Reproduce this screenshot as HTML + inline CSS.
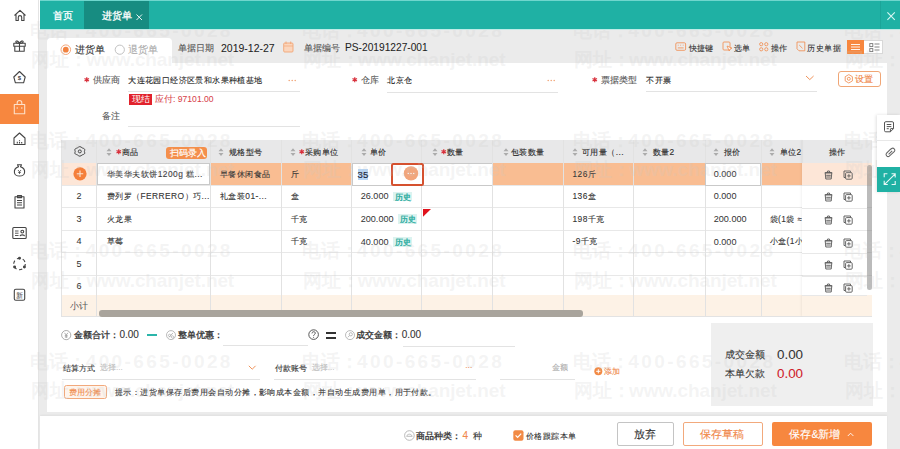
<!DOCTYPE html>
<html><head><meta charset="utf-8">
<style>
*{margin:0;padding:0;box-sizing:border-box}
html,body{width:900px;height:449px;overflow:hidden;background:#fff;font-family:"Liberation Sans",sans-serif;color:#333;font-size:8.5px}
.a{position:absolute;white-space:nowrap}
.t{position:absolute;white-space:nowrap;line-height:12px;height:12px;-webkit-text-stroke-width:0.1px}
svg.a{overflow:visible}
#side{left:0;top:0;width:39px;height:449px;background:#fff;border-right:1px solid #e4e4e4}
#top{left:40px;top:0;width:860px;height:30px;background:#1fb1a4;border-top:1px solid #6fd6cd;border-bottom:1px solid #bfece7}
#main{left:39px;top:30px;width:861px;height:419px;background:#ebebeb}
#tab1{left:84px;top:1px;width:65px;height:28px;background:#178c81}
#card{left:47px;top:63px;width:840px;height:349px;background:#fff}
#rtab{left:47px;top:38px;width:125px;height:26px;background:#fff;border-radius:4px 4px 0 0}
#foot{left:40px;top:416px;width:847px;height:33px;background:#fff;box-shadow:0 -1px 2px rgba(0,0,0,0.05)}
.wm{position:absolute;white-space:nowrap;font-size:19px;line-height:23px;color:rgba(200,200,200,0.2);z-index:5;font-weight:bold;-webkit-text-stroke-width:0}
#top,#tab1,.tb{z-index:6}
.lbl{color:#555;-webkit-text-stroke-width:0.1px}
.ul{position:absolute;height:1px;background:#e3e3e3}
.star{color:#d9323a}
.org{color:#f18a46}
</style></head><body>
<div class="a" id="side"></div>
<div class="a" id="main"></div>
<div class="a" id="top"></div>
<div class="a" id="tab1"></div>
<div class="t tb" style="left:52.5px;top:10px;font-size:9.6px;color:#fff;-webkit-text-stroke-width:0.3px">首页</div>
<div class="t tb" style="left:101.7px;top:10px;font-size:9.6px;color:#fff;-webkit-text-stroke-width:0.3px">进货单</div>
<svg class="a tb" style="left:135.5px;top:13.5px" width="7" height="7"><path d="M0.5 0.5L6 6M6 0.5L0.5 6" stroke="#fff" stroke-width="0.9"/></svg>
<div class="a tb" style="left:879.5px;top:1px;width:0.8px;height:28px;background:rgba(0,80,70,0.12)"></div><svg class="a tb" style="left:886.6px;top:12.2px" width="9" height="9"><path d="M0.4 0.4L7.8 7.8M7.8 0.4L0.4 7.8" stroke="#d8f7f3" stroke-width="1.1"/></svg>

<!-- sidebar -->
<div class="a" style="left:0;top:94px;width:39px;height:30px;background:#f7873f"></div>
<svg class="a" style="left:0;top:0" width="39" height="310" fill="none" stroke="#444" stroke-width="1.1" stroke-linejoin="round">
 <!-- home -->
 <path d="M14.5 15.5L20 10.3L25.5 15.5M16 14.3V20.5H18.3V17.3a1.7 1.7 0 0 1 3.4 0V20.5H24V14.3"/>
 <!-- gift -->
 <rect x="13.8" y="43.3" width="11.4" height="3"/><path d="M14.8 46.3V51.3H24.2V46.3M19.5 43.3V51.3M19.5 43.3C18.5 41 16 40.3 15.8 41.8C15.7 42.8 17.5 43.3 19.5 43.3C21.5 43.3 23.3 42.8 23.2 41.8C23 40.3 20.5 41 19.5 43.3"/>
 <!-- house $ -->
 <path d="M13.8 77L19.5 71.5L25.2 77L23.6 82.8H15.4Z"/>
 <text x="19.5" y="80.2" font-size="6" font-family="Liberation Sans" text-anchor="middle" fill="#444" stroke="none" font-weight="bold">$</text>
 <!-- bag (white) -->
 <path d="M14.3 104.5H24.7V113.8H14.3ZM17.2 104.5V102.8a2.3 2.3 0 0 1 4.6 0V104.5M17.2 107.2V108.8M21.8 107.2V108.8" stroke="#fde0c8"/>
 <!-- house chart -->
 <path d="M14 144.5V138L19.5 133L25 138V144.5H14Z"/><path d="M17.3 144.5V141M19.5 144.5V140M21.7 144.5V142" stroke-dasharray="1 0.6"/>
 <!-- money bag -->
 <path d="M17.5 164.8H21.5L20.5 166.8C23.5 167.8 25 170.5 24.5 173C24 175.2 22 176 19.5 176C17 176 15 175.2 14.5 173C14 170.5 15.5 167.8 18.5 166.8Z"/><path d="M18 170L19.5 171.8L21 170M19.5 171.8V174M18.2 172.5H20.8" stroke-width="0.8"/>
 <!-- clipboard -->
 <path d="M15 196.8H24V208H15Z M17.5 195.5H21.5V197.8H17.5Z M17 200.5H22M17 202.8H22M17 205H22"/>
 <!-- id card -->
 <rect x="12.8" y="227.5" width="13.4" height="11" rx="1"/><path d="M15 231H18.5M15 233.2H18.5M15 235.5H18.5" stroke-width="0.9"/><circle cx="22.3" cy="231.6" r="1.4"/><path d="M20 236.2C20.3 234.4 24.3 234.4 24.6 236.2"/>
 <!-- dotted circle -->
 <circle cx="19.5" cy="264" r="5.8" stroke-dasharray="3.4 2.6"/><circle cx="19.5" cy="258.2" r="0.9" fill="#444"/><circle cx="14.6" cy="267" r="0.9" fill="#444"/><circle cx="24.4" cy="267" r="0.9" fill="#444"/>
 <!-- doc new -->
 <rect x="14.3" y="289.3" width="10.4" height="11" rx="1.5"/><text x="19.5" y="297.6" font-size="6.5" text-anchor="middle" fill="#444" stroke="none">新</text>
</svg>

<!-- gray top area / card -->
<div class="a" id="rtab"></div>
<div class="a" id="card"></div>
<div class="a" id="foot"></div>

<!-- radio row -->
<svg class="a" style="left:60px;top:44px" width="12" height="12"><circle cx="5.8" cy="5.7" r="4.8" fill="#fff" stroke="#f5a77a" stroke-width="1"/><circle cx="5.8" cy="5.7" r="2.9" fill="#f28240"/></svg>
<div class="t" style="left:74.5px;top:43.7px;font-size:9.7px;color:#333">进货单</div>
<svg class="a" style="left:114px;top:44px" width="12" height="12"><circle cx="5.8" cy="5.7" r="4.6" fill="#fff" stroke="#c2c2c2" stroke-width="1"/></svg>
<div class="t" style="left:128px;top:43.7px;font-size:9.7px;color:#aaa">退货单</div>
<div class="t lbl" style="left:178px;top:41.5px;font-size:8.5px">单据日期</div>
<div class="t" style="left:221px;top:41.5px;font-size:10.5px;color:#222;-webkit-text-stroke-width:0.05px">2019-12-27</div>
<svg class="a" style="left:283px;top:41px" width="11" height="12"><rect x="0.7" y="2" width="9.3" height="9" rx="1" fill="#fbd6bd" stroke="#f2a676" stroke-width="0.9"/><path d="M3 0.5V3M7.7 0.5V3" stroke="#f2a676" stroke-width="0.9"/><path d="M1 5H10" stroke="#f2a676" stroke-width="0.7"/></svg>
<div class="t lbl" style="left:304px;top:41.5px;font-size:8.5px">单据编号</div>
<div class="t" style="left:345px;top:41.5px;font-size:10.2px;color:#222;-webkit-text-stroke-width:0.05px">PS-20191227-001</div>

<!-- toolbar -->
<svg class="a" style="left:675px;top:41px" width="12" height="11" fill="none" stroke="#f0935a" stroke-width="0.9"><rect x="0.8" y="1.8" width="9.8" height="7.5" rx="1.2"/><path d="M2.8 4.2H3.6M5.3 4.2H6.1M7.8 4.2H8.6M2.8 6.9H8.6"/></svg>
<div class="t" style="left:689px;top:41.5px;font-size:8.4px;color:#333;-webkit-text-stroke-width:0.1px">快捷键</div>
<svg class="a" style="left:722px;top:41px" width="12" height="11" fill="none" stroke="#f0935a" stroke-width="0.9"><rect x="1" y="1" width="7" height="8" rx="1"/><path d="M5 5L10 7.2L8 8L7.3 10Z" fill="#fff"/></svg>
<div class="t" style="left:733.5px;top:41.5px;font-size:8.4px;color:#333;-webkit-text-stroke-width:0.1px">选单</div>
<svg class="a" style="left:759px;top:42px" width="10" height="10" fill="none" stroke="#f0935a" stroke-width="0.9"><circle cx="2.2" cy="2.2" r="1.6"/><circle cx="7.3" cy="2.2" r="1.6"/><circle cx="2.2" cy="7.3" r="1.6"/><circle cx="7.3" cy="7.3" r="1.6"/></svg>
<div class="t" style="left:771px;top:41.5px;font-size:8.4px;color:#333;-webkit-text-stroke-width:0.1px">操作</div>
<svg class="a" style="left:796px;top:41px" width="10" height="11" fill="none" stroke="#f0935a" stroke-width="0.9"><path d="M1 1H8.8V9.8H3L1 7.8Z"/><path d="M3.2 4L6.5 7.3" /></svg>
<div class="t" style="left:807px;top:41.5px;font-size:8.4px;letter-spacing:0.5px;color:#333;-webkit-text-stroke-width:0.1px">历史单据</div>
<div class="a" style="left:846.5px;top:40px;width:18px;height:14px;background:#f7873f"></div>
<svg class="a" style="left:850px;top:43px" width="11" height="8"><path d="M1 1.5H10M1 4H10M1 6.5H10" stroke="#fff" stroke-width="0.9"/></svg>
<div class="a" style="left:864.4px;top:40px;width:19px;height:14px;background:#fff;border:1px solid #d8d8d8;border-left:none"></div>
<svg class="a" style="left:868.5px;top:42.5px" width="12" height="10" fill="none" stroke="#777" stroke-width="0.9"><rect x="0.8" y="0.6" width="3" height="3"/><rect x="0.8" y="5.6" width="3" height="3"/><path d="M5.5 1H10.5M5.5 4H10.5M5.5 7H10.5"/></svg>

<!-- form -->
<svg class="a" style="left:83.9px;top:76.6px" width="6" height="6"><path d="M2.75 0.2V5.3M0.5 1.4L5 4.1M5 1.4L0.5 4.1" stroke="#d8303c" stroke-width="1.2"/></svg>
<div class="t lbl" style="left:93px;top:74px;font-size:8.5px">供应商</div>
<div class="t" style="left:128.3px;top:74px;font-size:8.4px;letter-spacing:0.4px;color:#222">大连花园口经济区景和水果种植基地</div>
<svg class="a" style="left:287.5px;top:78.5px" width="10" height="4"><circle cx="1.2" cy="1.5" r="0.75" fill="#f0a070"/><circle cx="4.2" cy="1.5" r="0.75" fill="#f0a070"/><circle cx="7.2" cy="1.5" r="0.75" fill="#f0a070"/></svg>
<div class="ul" style="left:128px;top:91px;width:172px"></div>
<div class="a" style="left:128.5px;top:93.5px;width:23.5px;height:11px;background:#e1222c"></div>
<div class="t" style="left:131.5px;top:93.3px;font-size:8.6px;color:#fff;-webkit-text-stroke-width:0">现结</div>
<div class="t" style="left:155px;top:93.3px;font-size:8.6px;color:#d83f4a;-webkit-text-stroke-width:0.05px">应付: 97101.00</div>
<div class="t lbl" style="left:102px;top:110.2px;font-size:8.5px">备注</div>
<div class="ul" style="left:128px;top:126px;width:172px"></div>

<svg class="a" style="left:352.4px;top:76.6px" width="6" height="6"><path d="M2.75 0.2V5.3M0.5 1.4L5 4.1M5 1.4L0.5 4.1" stroke="#d8303c" stroke-width="1.2"/></svg>
<div class="t lbl" style="left:361px;top:74px;font-size:8.5px">仓库</div>
<div class="t" style="left:387px;top:74px;font-size:8.4px;letter-spacing:0.5px;color:#222">北京仓</div>
<svg class="a" style="left:546.5px;top:78.5px" width="10" height="4"><circle cx="1.2" cy="1.5" r="0.75" fill="#f0a070"/><circle cx="4.2" cy="1.5" r="0.75" fill="#f0a070"/><circle cx="7.2" cy="1.5" r="0.75" fill="#f0a070"/></svg>
<div class="ul" style="left:387px;top:92px;width:171px"></div>

<svg class="a" style="left:592.4px;top:76.6px" width="6" height="6"><path d="M2.75 0.2V5.3M0.5 1.4L5 4.1M5 1.4L0.5 4.1" stroke="#d8303c" stroke-width="1.2"/></svg>
<div class="t lbl" style="left:601px;top:74px;font-size:8.5px">票据类型</div>
<div class="t" style="left:646px;top:74px;font-size:8.4px;letter-spacing:0.5px;color:#222">不开票</div>
<svg class="a" style="left:805px;top:75px" width="10" height="6"><path d="M1 1L4.8 4.6L8.6 1" fill="none" stroke="#f0935a" stroke-width="1"/></svg>
<div class="ul" style="left:646px;top:91px;width:171px"></div>
<div class="a" style="left:838px;top:70.7px;width:43px;height:16px;border:1px solid #f0a676;border-radius:3px;background:#fff"></div>
<svg class="a" style="left:844px;top:74px" width="10" height="10" fill="none" stroke="#f0935a" stroke-width="0.9"><circle cx="4.8" cy="4.8" r="1.5"/><path d="M4.8 0.6L8.4 2.7V6.9L4.8 9L1.2 6.9V2.7Z"/></svg>
<div class="t" style="left:855px;top:73px;font-size:8.6px;color:#f0884a">设置</div>

<!-- right float panel -->
<div class="a" style="left:876.5px;top:114.5px;width:23.5px;height:77px;background:#fff;box-shadow:-1px 0 3px rgba(0,0,0,0.12);z-index:7"></div>
<div class="a" style="left:876.5px;top:140px;width:23.5px;height:1px;background:#e8e8e8;z-index:7"></div>
<div class="a" style="left:876.5px;top:166.7px;width:23.5px;height:25px;background:#20b1a4;z-index:7"></div>
<svg class="a" style="left:876.5px;top:114.5px;z-index:7" width="24" height="77" fill="none" stroke="#555" stroke-width="1">
 <path d="M8.8 6.7H15.2a1.3 1.3 0 0 1 1.3 1.3V13.6L13.4 16.8H8.8a1.3 1.3 0 0 1 -1.3 -1.3V8a1.3 1.3 0 0 1 1.3 -1.3Z M13.4 16.8V14.2a0.6 0.6 0 0 1 0.6 -0.6H16.5 M9.7 9.5H14.3M9.7 11.6H14.3M9.7 13.7H11.8"/>
 <path d="M12.6 35.2L14.6 33.5a2.1 2.1 0 0 1 2.9 2.9L12.3 41.2a2.1 2.1 0 0 1 -2.9 -2.9L13.6 34.2M11.6 39.3L15.2 35.8" stroke="#666" stroke-width="1.05"/>
 <path d="M7.2 62.2V58.8H10.4M14.5 58.8H18.2V62.4M18.2 58.8L7.6 69.3M7.2 65.8V69.5H10.8M14.6 69.5H18.2V66" stroke="#e6f7f5" stroke-width="1.1"/>
</svg>
<!--TABLE_START-->
<div class="a" style="left:61.3px;top:140px;width:810.7px;height:176px;background:#fff"></div>
<div class="a" style="left:61.3px;top:140px;width:810.7px;height:22.5px;background:#e8e8e9"></div>
<div class="a" style="left:61.3px;top:162.5px;width:810.7px;height:22.5px;background:#fde6d7"></div>
<div class="a" style="left:210px;top:162.5px;width:71px;height:22.5px;background:#f9bd92"></div>
<div class="a" style="left:281px;top:162.5px;width:70.6px;height:22.5px;background:#f9bd92"></div>
<div class="a" style="left:492.3px;top:162.5px;width:70.7px;height:22.5px;background:#f9bd92"></div>
<div class="a" style="left:563px;top:162.5px;width:70.6px;height:22.5px;background:#f9bd92"></div>
<div class="a" style="left:633.6px;top:162.5px;width:71.7px;height:22.5px;background:#f9bd92"></div>
<div class="a" style="left:761.3px;top:162.5px;width:40.7px;height:22.5px;background:#f9bd92"></div>
<div class="a" style="left:61.3px;top:294.5px;width:810.7px;height:21.5px;background:#fdf2e6"></div>
<div class="a" style="left:61.3px;top:184.5px;width:810.7px;height:1px;background:#e8e8e8"></div>
<div class="a" style="left:61.3px;top:207.0px;width:810.7px;height:1px;background:#e8e8e8"></div>
<div class="a" style="left:61.3px;top:229.5px;width:810.7px;height:1px;background:#e8e8e8"></div>
<div class="a" style="left:61.3px;top:252.0px;width:810.7px;height:1px;background:#e8e8e8"></div>
<div class="a" style="left:61.3px;top:275.0px;width:810.7px;height:1px;background:#e8e8e8"></div>
<div class="a" style="left:61.3px;top:315.5px;width:810.7px;height:1px;background:#e3e3e3"></div>
<div class="a" style="left:60.8px;top:140px;width:1px;height:176px;background:#e3e3e3"></div>
<div class="a" style="left:96.0px;top:140px;width:1px;height:176px;background:#e2e2e2"></div>
<div class="a" style="left:209.5px;top:140px;width:1px;height:176px;background:#e2e2e2"></div>
<div class="a" style="left:280.5px;top:140px;width:1px;height:176px;background:#e2e2e2"></div>
<div class="a" style="left:351.1px;top:140px;width:1px;height:176px;background:#e2e2e2"></div>
<div class="a" style="left:420.5px;top:140px;width:1px;height:176px;background:#e2e2e2"></div>
<div class="a" style="left:491.8px;top:140px;width:1px;height:176px;background:#e2e2e2"></div>
<div class="a" style="left:562.5px;top:140px;width:1px;height:176px;background:#e2e2e2"></div>
<div class="a" style="left:633.1px;top:140px;width:1px;height:176px;background:#e2e2e2"></div>
<div class="a" style="left:704.8px;top:140px;width:1px;height:176px;background:#e2e2e2"></div>
<div class="a" style="left:760.8px;top:140px;width:1px;height:176px;background:#e2e2e2"></div>
<div class="a" style="left:801.5px;top:140px;width:1px;height:176px;background:#e0e0e0;box-shadow:-1px 0 2px rgba(0,0,0,0.08)"></div>
<div class="a" style="left:97.3px;top:163.3px;width:112.9px;height:22px;background:#fff;border:1.2px solid #c9c9c9"></div>
<div class="a" style="left:351.6px;top:162.8px;width:73px;height:23px;background:#fff;border:1.2px solid #c9c9c9"></div>
<div class="a" style="left:421px;top:162.8px;width:71.3px;height:23px;background:#fff;border-top:1.2px solid #c9c9c9;border-bottom:1.2px solid #c9c9c9"></div>
<div class="a" style="left:705.3px;top:162.8px;width:56px;height:23px;background:#fff;border:1.2px solid #c9c9c9"></div>
<svg class="a" style="left:73.6px;top:146.2px" width="12" height="11" fill="none" stroke="#444" stroke-width="1"><path d="M5.8 0.6C6.9 0.6 7.4 1.5 8.2 1.9C9.1 2.3 10.3 2.4 10.7 3.4C11 4.3 10.4 4.9 10.4 5.4C10.4 5.9 11 6.5 10.7 7.4C10.3 8.4 9.1 8.5 8.2 8.9C7.4 9.3 6.9 10.2 5.8 10.2C4.7 10.2 4.2 9.3 3.4 8.9C2.5 8.5 1.3 8.4 0.9 7.4C0.6 6.5 1.2 5.9 1.2 5.4C1.2 4.9 0.6 4.3 0.9 3.4C1.3 2.4 2.5 2.3 3.4 1.9C4.2 1.5 4.7 0.6 5.8 0.6Z"/><circle cx="5.8" cy="5.4" r="1.5"/></svg>
<svg class="a" style="left:106px;top:147.6px" width="7" height="9"><path d="M0.5 3.2L3 0.3L5.5 3.2Z M0.5 5.1L3 8.1L5.5 5.1Z" fill="#acacac"/></svg>
<svg class="a" style="left:115.5px;top:149px" width="6" height="6"><path d="M2.75 0.2V5.3M0.5 1.4L5 4.1M5 1.4L0.5 4.1" stroke="#d8303c" stroke-width="1.2"/></svg>
<div class="t" style="left:122px;top:146px;font-size:8.4px;letter-spacing:0.45px;color:#2a2a2a;-webkit-text-stroke-width:0.12px">商品</div>
<div class="a" style="left:166.3px;top:147px;width:41px;height:12px;background:#f48f4c;border-radius:3px"></div>
<div class="t" style="left:169.5px;top:147px;font-size:8.5px;color:#fff;-webkit-text-stroke-width:0.15px">扫码录入</div>
<svg class="a" style="left:217.5px;top:147.6px" width="7" height="9"><path d="M0.5 3.2L3 0.3L5.5 3.2Z M0.5 5.1L3 8.1L5.5 5.1Z" fill="#acacac"/></svg>
<div class="t" style="left:229px;top:146px;font-size:8.4px;letter-spacing:0.45px;color:#2a2a2a;-webkit-text-stroke-width:0.12px">规格型号</div>
<svg class="a" style="left:289.5px;top:147.6px" width="7" height="9"><path d="M0.5 3.2L3 0.3L5.5 3.2Z M0.5 5.1L3 8.1L5.5 5.1Z" fill="#acacac"/></svg>
<svg class="a" style="left:299px;top:149px" width="6" height="6"><path d="M2.75 0.2V5.3M0.5 1.4L5 4.1M5 1.4L0.5 4.1" stroke="#d8303c" stroke-width="1.2"/></svg>
<div class="t" style="left:305px;top:146px;font-size:8.4px;letter-spacing:0.45px;color:#2a2a2a;-webkit-text-stroke-width:0.12px">采购单位</div>
<svg class="a" style="left:361px;top:147.6px" width="7" height="9"><path d="M0.5 3.2L3 0.3L5.5 3.2Z M0.5 5.1L3 8.1L5.5 5.1Z" fill="#acacac"/></svg>
<div class="t" style="left:370px;top:146px;font-size:8.4px;letter-spacing:0.45px;color:#2a2a2a;-webkit-text-stroke-width:0.12px">单价</div>
<svg class="a" style="left:431.5px;top:147.6px" width="7" height="9"><path d="M0.5 3.2L3 0.3L5.5 3.2Z M0.5 5.1L3 8.1L5.5 5.1Z" fill="#acacac"/></svg>
<svg class="a" style="left:440.5px;top:149px" width="6" height="6"><path d="M2.75 0.2V5.3M0.5 1.4L5 4.1M5 1.4L0.5 4.1" stroke="#d8303c" stroke-width="1.2"/></svg>
<div class="t" style="left:446.7px;top:146px;font-size:8.4px;letter-spacing:0.45px;color:#2a2a2a;-webkit-text-stroke-width:0.12px">数量</div>
<svg class="a" style="left:502.5px;top:147.6px" width="7" height="9"><path d="M0.5 3.2L3 0.3L5.5 3.2Z M0.5 5.1L3 8.1L5.5 5.1Z" fill="#acacac"/></svg>
<div class="t" style="left:510.7px;top:146px;font-size:8.4px;letter-spacing:0.45px;color:#2a2a2a;-webkit-text-stroke-width:0.12px">包装数量</div>
<svg class="a" style="left:571.5px;top:147.6px" width="7" height="9"><path d="M0.5 3.2L3 0.3L5.5 3.2Z M0.5 5.1L3 8.1L5.5 5.1Z" fill="#acacac"/></svg>
<div class="t" style="left:582px;top:146px;font-size:8.4px;letter-spacing:0.45px;color:#2a2a2a;-webkit-text-stroke-width:0.12px">可用量（...</div>
<svg class="a" style="left:642px;top:147.6px" width="7" height="9"><path d="M0.5 3.2L3 0.3L5.5 3.2Z M0.5 5.1L3 8.1L5.5 5.1Z" fill="#acacac"/></svg>
<div class="t" style="left:652.5px;top:146px;font-size:8.4px;letter-spacing:0.45px;color:#2a2a2a;-webkit-text-stroke-width:0.12px">数量2</div>
<svg class="a" style="left:713px;top:147.6px" width="7" height="9"><path d="M0.5 3.2L3 0.3L5.5 3.2Z M0.5 5.1L3 8.1L5.5 5.1Z" fill="#acacac"/></svg>
<div class="t" style="left:723.6px;top:146px;font-size:8.4px;letter-spacing:0.45px;color:#2a2a2a;-webkit-text-stroke-width:0.12px">报价</div>
<svg class="a" style="left:769px;top:147.6px" width="7" height="9"><path d="M0.5 3.2L3 0.3L5.5 3.2Z M0.5 5.1L3 8.1L5.5 5.1Z" fill="#acacac"/></svg>
<div class="t" style="left:779.5px;top:146px;font-size:8.4px;letter-spacing:0.45px;color:#2a2a2a;-webkit-text-stroke-width:0.12px">单位2</div>
<div class="t" style="left:829px;top:146px;font-size:8.4px;letter-spacing:0.45px;color:#2a2a2a;-webkit-text-stroke-width:0.12px">操作</div>
<svg class="a" style="left:73px;top:167px" width="14" height="14"><circle cx="7" cy="6.8" r="6.6" fill="#f57f3a"/><path d="M7 3.6V10M3.8 6.8H10.2" stroke="#fde3d0" stroke-width="1.1"/></svg>
<div class="t" style="left:107px;top:168.2px;font-size:8.4px;color:#333;letter-spacing:0.45px;-webkit-text-stroke-width:0.1px">华美华夫软饼1200g 糕...</div>
<div class="t" style="left:220px;top:168.2px;font-size:8.4px;color:#333;letter-spacing:0.45px;-webkit-text-stroke-width:0.1px">早餐休闲食品</div>
<div class="t" style="left:290.5px;top:168.2px;font-size:8.4px;color:#333;letter-spacing:0.45px;-webkit-text-stroke-width:0.1px">斤</div>
<div class="a" style="left:357.8px;top:169.2px;width:10.4px;height:10.4px;background:#b6d5f5"></div>
<div class="t" style="left:357.6px;top:169.2px;font-size:9.6px;color:#1a2233;-webkit-text-stroke-width:0.15px">35</div>
<div class="a" style="left:391.2px;top:163.2px;width:33.3px;height:23.2px;border:2px solid #d5512f;border-radius:2.5px;background:#fff"></div>
<svg class="a" style="left:403px;top:166px" width="16" height="16"><circle cx="8" cy="7.4" r="7.2" fill="#f2a67c"/><circle cx="5.3" cy="7.4" r="0.7" fill="#fff"/><circle cx="8" cy="7.4" r="0.7" fill="#fff"/><circle cx="10.7" cy="7.4" r="0.7" fill="#fff"/></svg>
<div class="t" style="left:572.5px;top:168.2px;font-size:8.4px;color:#333;letter-spacing:0.45px;-webkit-text-stroke-width:0.1px">126斤</div>
<div class="t" style="left:713.7px;top:168.2px;font-size:9.1px;color:#333;-webkit-text-stroke-width:0.02px">0.000</div>
<div class="t" style="left:61.3px;width:35.4px;text-align:center;top:190.2px;font-size:9px;color:#333;-webkit-text-stroke-width:0.05px">2</div>
<div class="t" style="left:61.3px;width:35.4px;text-align:center;top:212.8px;font-size:9px;color:#333;-webkit-text-stroke-width:0.05px">3</div>
<div class="t" style="left:61.3px;width:35.4px;text-align:center;top:235.4px;font-size:9px;color:#333;-webkit-text-stroke-width:0.05px">4</div>
<div class="t" style="left:61.3px;width:35.4px;text-align:center;top:257.9px;font-size:9px;color:#333;-webkit-text-stroke-width:0.05px">5</div>
<div class="t" style="left:61.3px;width:35.4px;text-align:center;top:280px;font-size:9px;color:#333;-webkit-text-stroke-width:0.05px">6</div>
<div class="t" style="left:106.7px;top:190.2px;font-size:8.4px;color:#333;letter-spacing:0.45px;-webkit-text-stroke-width:0.1px">费列罗（FERRERO）巧...</div>
<div class="t" style="left:220px;top:190.2px;font-size:8.4px;color:#333;letter-spacing:0.45px;-webkit-text-stroke-width:0.1px">礼盒装01-...</div>
<div class="t" style="left:290.5px;top:190.2px;font-size:8.4px;color:#333;letter-spacing:0.45px;-webkit-text-stroke-width:0.1px">盒</div>
<div class="t" style="left:360.7px;top:190.4px;font-size:9.1px;color:#333;-webkit-text-stroke-width:0.02px">26.000</div>
<div class="a" style="left:392.7px;top:191.8px;width:19px;height:9.5px;background:#dcf3f0"></div>
<div class="t" style="left:394.7px;top:190.6px;font-size:8.4px;color:#1ea99b;-webkit-text-stroke-width:0.3px">历史</div>
<div class="t" style="left:572.5px;top:190.2px;font-size:8.4px;color:#333;letter-spacing:0.45px;-webkit-text-stroke-width:0.1px">136盒</div>
<div class="t" style="left:713.7px;top:190.4px;font-size:9.1px;color:#333;-webkit-text-stroke-width:0.02px">0.000</div>
<div class="t" style="left:106.7px;top:212.8px;font-size:8.4px;color:#333;letter-spacing:0.45px;-webkit-text-stroke-width:0.1px">火龙果</div>
<div class="t" style="left:290.5px;top:212.8px;font-size:8.4px;color:#333;letter-spacing:0.45px;-webkit-text-stroke-width:0.1px">千克</div>
<div class="t" style="left:360.7px;top:213px;font-size:9.1px;color:#333;-webkit-text-stroke-width:0.02px">200.000</div>
<div class="a" style="left:398.0px;top:214.4px;width:19px;height:9.5px;background:#dcf3f0"></div>
<div class="t" style="left:400.0px;top:213.2px;font-size:8.4px;color:#1ea99b;-webkit-text-stroke-width:0.3px">历史</div>
<svg class="a" style="left:423px;top:208.5px" width="9" height="9"><path d="M0 0H8L0 7.8Z" fill="#e0121c"/></svg>
<div class="t" style="left:572.5px;top:212.8px;font-size:8.4px;color:#333;letter-spacing:0.45px;-webkit-text-stroke-width:0.1px">198千克</div>
<div class="t" style="left:713.7px;top:213px;font-size:9.1px;color:#333;-webkit-text-stroke-width:0.02px">200.000</div>
<div class="t" style="left:769.5px;top:212.8px;font-size:8.4px;color:#333;letter-spacing:0.45px;-webkit-text-stroke-width:0.1px">袋(1袋 ≈</div>
<div class="t" style="left:106.7px;top:235.4px;font-size:8.4px;color:#333;letter-spacing:0.45px;-webkit-text-stroke-width:0.1px">草莓</div>
<div class="t" style="left:290.5px;top:235.4px;font-size:8.4px;color:#333;letter-spacing:0.45px;-webkit-text-stroke-width:0.1px">千克</div>
<div class="t" style="left:360.7px;top:235.6px;font-size:9.1px;color:#333;-webkit-text-stroke-width:0.02px">40.000</div>
<div class="a" style="left:392.7px;top:237.0px;width:19px;height:9.5px;background:#dcf3f0"></div>
<div class="t" style="left:394.7px;top:235.8px;font-size:8.4px;color:#1ea99b;-webkit-text-stroke-width:0.3px">历史</div>
<div class="t" style="left:572.5px;top:235.4px;font-size:8.4px;color:#333;letter-spacing:0.45px;-webkit-text-stroke-width:0.1px">-9千克</div>
<div class="t" style="left:713.7px;top:235.6px;font-size:9.1px;color:#333;-webkit-text-stroke-width:0.02px">0.000</div>
<div class="t" style="left:769.5px;top:235.4px;font-size:8.4px;color:#333;letter-spacing:0.45px;-webkit-text-stroke-width:0.1px">小盒(1小</div>
<div class="a" style="left:802px;top:162.5px;width:65px;height:22.5px;background:#fde6d7"></div>
<div class="a" style="left:802px;top:185px;width:65px;height:22.5px;background:#fff;border-top:1px solid #e8e8e8"></div>
<div class="a" style="left:802px;top:207.5px;width:65px;height:22.5px;background:#fff;border-top:1px solid #e8e8e8"></div>
<div class="a" style="left:802px;top:230px;width:65px;height:22.5px;background:#fff;border-top:1px solid #e8e8e8"></div>
<div class="a" style="left:802px;top:252.5px;width:65px;height:22.5px;background:#fff;border-top:1px solid #e8e8e8"></div>
<div class="a" style="left:802px;top:275.5px;width:65px;height:19px;background:#fff;border-top:1px solid #e8e8e8"></div>
<div class="a" style="left:802px;top:294.5px;width:65px;height:21px;background:#fdf2e6;border-top:1px solid #e8e8e8"></div>
<svg class="a" style="left:823.5px;top:169.7px" width="9" height="10" fill="none" stroke="#555" stroke-width="0.9"><path d="M1.2 2.8H7.8L7.2 9H1.8Z M0.8 2.8H8.2M3 2.8L3.6 1H5.4L6 2.8M2.2 5.3H6.8M2.3 7H6.7"/></svg>
<svg class="a" style="left:842.8px;top:169.7px" width="10" height="10" fill="none" stroke="#555" stroke-width="0.9"><path d="M2.2 7.5H1V1H7.5V2.2"/><rect x="2.6" y="2.6" width="6.6" height="6.6" rx="1"/><path d="M5.9 4.1V7.7M4.1 5.9H7.7" stroke-width="0.9"/></svg>
<svg class="a" style="left:823.5px;top:191.7px" width="9" height="10" fill="none" stroke="#555" stroke-width="0.9"><path d="M1.2 2.8H7.8L7.2 9H1.8Z M0.8 2.8H8.2M3 2.8L3.6 1H5.4L6 2.8M2.2 5.3H6.8M2.3 7H6.7"/></svg>
<svg class="a" style="left:842.8px;top:191.7px" width="10" height="10" fill="none" stroke="#555" stroke-width="0.9"><path d="M2.2 7.5H1V1H7.5V2.2"/><rect x="2.6" y="2.6" width="6.6" height="6.6" rx="1"/><path d="M5.9 4.1V7.7M4.1 5.9H7.7" stroke-width="0.9"/></svg>
<svg class="a" style="left:823.5px;top:215.1px" width="9" height="10" fill="none" stroke="#555" stroke-width="0.9"><path d="M1.2 2.8H7.8L7.2 9H1.8Z M0.8 2.8H8.2M3 2.8L3.6 1H5.4L6 2.8M2.2 5.3H6.8M2.3 7H6.7"/></svg>
<svg class="a" style="left:842.8px;top:215.1px" width="10" height="10" fill="none" stroke="#555" stroke-width="0.9"><path d="M2.2 7.5H1V1H7.5V2.2"/><rect x="2.6" y="2.6" width="6.6" height="6.6" rx="1"/><path d="M5.9 4.1V7.7M4.1 5.9H7.7" stroke-width="0.9"/></svg>
<svg class="a" style="left:823.5px;top:237.8px" width="9" height="10" fill="none" stroke="#555" stroke-width="0.9"><path d="M1.2 2.8H7.8L7.2 9H1.8Z M0.8 2.8H8.2M3 2.8L3.6 1H5.4L6 2.8M2.2 5.3H6.8M2.3 7H6.7"/></svg>
<svg class="a" style="left:842.8px;top:237.8px" width="10" height="10" fill="none" stroke="#555" stroke-width="0.9"><path d="M2.2 7.5H1V1H7.5V2.2"/><rect x="2.6" y="2.6" width="6.6" height="6.6" rx="1"/><path d="M5.9 4.1V7.7M4.1 5.9H7.7" stroke-width="0.9"/></svg>
<svg class="a" style="left:823.5px;top:259.6px" width="9" height="10" fill="none" stroke="#555" stroke-width="0.9"><path d="M1.2 2.8H7.8L7.2 9H1.8Z M0.8 2.8H8.2M3 2.8L3.6 1H5.4L6 2.8M2.2 5.3H6.8M2.3 7H6.7"/></svg>
<svg class="a" style="left:842.8px;top:259.6px" width="10" height="10" fill="none" stroke="#555" stroke-width="0.9"><path d="M2.2 7.5H1V1H7.5V2.2"/><rect x="2.6" y="2.6" width="6.6" height="6.6" rx="1"/><path d="M5.9 4.1V7.7M4.1 5.9H7.7" stroke-width="0.9"/></svg>
<svg class="a" style="left:823.5px;top:283.0px" width="9" height="10" fill="none" stroke="#555" stroke-width="0.9"><path d="M1.2 2.8H7.8L7.2 9H1.8Z M0.8 2.8H8.2M3 2.8L3.6 1H5.4L6 2.8M2.2 5.3H6.8M2.3 7H6.7"/></svg>
<svg class="a" style="left:842.8px;top:283.0px" width="10" height="10" fill="none" stroke="#555" stroke-width="0.9"><path d="M2.2 7.5H1V1H7.5V2.2"/><rect x="2.6" y="2.6" width="6.6" height="6.6" rx="1"/><path d="M5.9 4.1V7.7M4.1 5.9H7.7" stroke-width="0.9"/></svg>
<div class="t" style="left:61.3px;width:35.4px;text-align:center;top:300px;font-size:8.5px;color:#555;-webkit-text-stroke-width:0.05px">小计</div>
<div class="a" style="left:99px;top:310.4px;width:484px;height:6.2px;background:#a9a49c;border-radius:3px"></div>
<div class="a" style="left:867.2px;top:164.5px;width:5px;height:125px;background:rgba(120,120,120,0.5);border-radius:2.5px"></div>
<!--TABLE_END-->
<!--BOTTOM_START-->
<svg class="a" style="left:61px;top:330px" width="11" height="11" fill="none" stroke="#999" stroke-width="0.8"><circle cx="5.2" cy="5.1" r="4.6"/><path d="M3.5 2.8L5.2 5.1L6.9 2.8M5.2 5.1V8M3.8 5.6H6.6M3.8 6.9H6.6"/></svg>
<div class="t" style="left:74px;top:329px;font-size:8.5px;color:#333;-webkit-text-stroke-width:0.3px">金额合计：</div>
<div class="t" style="left:119.4px;top:329px;font-size:10px;color:#333;">0.00</div>
<div class="a" style="left:147px;top:334.3px;width:9.6px;height:1.6px;background:#2bb5aa"></div>
<svg class="a" style="left:165.5px;top:330px" width="11" height="11" fill="none" stroke="#aaa" stroke-width="0.8"><circle cx="5" cy="5.1" r="4.5"/><path d="M3 7.3L7 2.9M3.5 4.2a1.2 1.2 0 1 0 0.1 0M6.5 5.8a1.2 1.2 0 1 0 0.1 0"/></svg>
<div class="t" style="left:178px;top:329px;font-size:8.5px;color:#333;-webkit-text-stroke-width:0.3px">整单优惠：</div>
<div class="ul" style="left:223px;top:345px;width:85px"></div>
<svg class="a" style="left:307.5px;top:329px" width="12" height="12" fill="none" stroke="#444" stroke-width="0.9"><circle cx="5.6" cy="5.6" r="4.8"/><path d="M4 4.4C4 2.2 7.3 2.2 7.3 4.2C7.3 5.4 5.6 5.5 5.6 6.8"/><circle cx="5.6" cy="8.3" r="0.5" fill="#444" stroke="none"/></svg>
<div class="a" style="left:325.5px;top:332.2px;width:10px;height:1.8px;background:#333"></div>
<div class="a" style="left:325.5px;top:336.8px;width:10px;height:1.8px;background:#333"></div>
<svg class="a" style="left:344.5px;top:330px" width="11" height="11" fill="none" stroke="#aaa" stroke-width="0.8"><circle cx="5" cy="5.1" r="4.5"/><circle cx="5.8" cy="4.3" r="1.6"/><path d="M4.6 5.5L2.8 7.3"/></svg>
<div class="t" style="left:356px;top:329px;font-size:8.5px;color:#333;-webkit-text-stroke-width:0.3px">成交金额：</div>
<div class="t" style="left:401.7px;top:329px;font-size:10px;color:#333;">0.00</div>
<div class="ul" style="left:402.7px;top:345.5px;width:112px"></div>
<div class="t" style="left:62.7px;top:362px;font-size:8.3px;color:#333;">结算方式</div>
<div class="t" style="left:100px;top:362px;font-size:8px;color:#bbb;">选择...</div>
<svg class="a" style="left:247.5px;top:365px" width="9" height="6"><path d="M0.8 0.8L4.2 4.2L7.6 0.8" fill="none" stroke="#f0935a" stroke-width="1"/></svg>
<div class="ul" style="left:62px;top:379px;width:198px"></div>
<div class="t" style="left:275px;top:362px;font-size:8.3px;color:#333;">付款账号</div>
<div class="t" style="left:311.7px;top:362px;font-size:8px;color:#bbb;">选择...</div>
<div class="t" style="left:465px;top:360.5px;font-size:8.5px;color:#f0935a;letter-spacing:-0.5px">···</div>
<div class="ul" style="left:274px;top:379px;width:202px"></div>
<div class="t" style="left:552px;top:362px;font-size:7.8px;color:#aaa;">金额</div>
<div class="ul" style="left:499.7px;top:379px;width:75.6px"></div>
<svg class="a" style="left:593.5px;top:366.5px" width="9" height="9"><circle cx="4.3" cy="4.3" r="4" fill="#f28a45"/><path d="M4.3 2.2V6.4M2.2 4.3H6.4" stroke="#fff" stroke-width="1"/></svg>
<div class="t" style="left:604px;top:365px;font-size:8.4px;color:#f0884a;">添加</div>
<div class="a" style="left:64px;top:385px;width:43.3px;height:14.3px;background:#fef4ec;border:1px solid #f2a97c;border-radius:2.5px"></div>
<div class="t" style="left:68.5px;top:386.2px;font-size:8.3px;color:#f08b4c;">费用分摊</div>
<div class="t" style="left:115px;top:386.3px;font-size:8.4px;color:#333;letter-spacing:0.47px">提示：进货单保存后费用会自动分摊，影响成本金额，并自动生成费用单，用于付款。</div>
<div class="a" style="left:710.7px;top:323px;width:162.6px;height:82.7px;background:#efefef"></div>
<div class="t" style="left:724.5px;top:349.3px;font-size:9.6px;color:#333;-webkit-text-stroke-width:0.1px">成交金额</div>
<div class="t" style="left:777px;top:349.3px;font-size:13.4px;color:#333;-webkit-text-stroke-width:0.05px">0.00</div>
<div class="t" style="left:724.5px;top:368px;font-size:9.6px;color:#333;-webkit-text-stroke-width:0.1px">本单欠款</div>
<div class="t" style="left:777px;top:368.2px;font-size:13.4px;color:#d0202a;-webkit-text-stroke-width:0.05px">0.00</div>
<svg class="a" style="left:403.5px;top:430px" width="12" height="12" fill="none" stroke="#aaa" stroke-width="0.8"><circle cx="5.4" cy="5.5" r="4.8"/><path d="M2.6 6.3C3.5 3.5 7.3 3.5 8.2 6.3Z"/></svg>
<div class="t" style="left:416.4px;top:429.5px;font-size:8.6px;color:#333;-webkit-text-stroke-width:0.3px">商品种类：</div>
<div class="t" style="left:462.5px;top:429.8px;font-size:10px;color:#f0884a;">4</div>
<div class="t" style="left:472.5px;top:429.5px;font-size:8.8px;color:#333;">种</div>
<svg class="a" style="left:512.5px;top:430px" width="11" height="11"><rect x="0.3" y="0.3" width="10.2" height="10.4" rx="2" fill="#f28a45"/><path d="M2.6 5.4L4.6 7.4L8.2 3.6" fill="none" stroke="#fff" stroke-width="1.2"/></svg>
<div class="t" style="left:526px;top:429.5px;font-size:8.4px;color:#333;letter-spacing:0.4px">价格跟踪本单</div>
<div class="a" style="left:616.6px;top:421.6px;width:57px;height:24.4px;background:#fff;border:1px solid #c4c4c4;border-radius:2px"></div>
<div class="t" style="left:634px;top:428px;font-size:11px;color:#333;-webkit-text-stroke-width:0.1px">放弃</div>
<div class="a" style="left:682.7px;top:421.6px;width:80.3px;height:24.4px;background:#fff;border:1px solid #f2a97c;border-radius:2px"></div>
<div class="t" style="left:700px;top:428px;font-size:11px;color:#f0884a;-webkit-text-stroke-width:0.1px">保存草稿</div>
<div class="a" style="left:772px;top:421.6px;width:99.7px;height:24.4px;background:#f7873f;border-radius:2px"></div>
<div class="t" style="left:789.4px;top:428px;font-size:10.5px;color:#fff;-webkit-text-stroke-width:0.1px">保存&amp;新增</div>
<svg class="a" style="left:846.5px;top:432px" width="8" height="5"><path d="M0.8 4L3.6 1.2L6.4 4" fill="none" stroke="#fff" stroke-width="0.9"/></svg>
<div class="wm" style="left:30.2px;top:18.8px">电话：</div>
<div class="wm" style="left:85.7px;top:18.8px;letter-spacing:2.4px">400-665-0028</div>
<div class="wm" style="left:31.2px;top:48.2px">网址：</div>
<div class="wm" style="left:86.4px;top:48.2px;letter-spacing:-0.1px">www.chanjet.net</div>
<div class="wm" style="left:301.5px;top:18.8px">电话：</div>
<div class="wm" style="left:357.0px;top:18.8px;letter-spacing:2.4px">400-665-0028</div>
<div class="wm" style="left:302.5px;top:48.2px">网址：</div>
<div class="wm" style="left:357.7px;top:48.2px;letter-spacing:-0.1px">www.chanjet.net</div>
<div class="wm" style="left:572.8px;top:18.8px">电话：</div>
<div class="wm" style="left:628.3px;top:18.8px;letter-spacing:2.4px">400-665-0028</div>
<div class="wm" style="left:573.8px;top:48.2px">网址：</div>
<div class="wm" style="left:629.0px;top:48.2px;letter-spacing:-0.1px">www.chanjet.net</div>
<div class="wm" style="left:844px;top:18.8px">电话：</div>
<div class="wm" style="left:899.5px;top:18.8px;letter-spacing:2.4px">400-665-0028</div>
<div class="wm" style="left:845px;top:48.2px">网址：</div>
<div class="wm" style="left:900.2px;top:48.2px;letter-spacing:-0.1px">www.chanjet.net</div>
<div class="wm" style="left:30.2px;top:128.8px">电话：</div>
<div class="wm" style="left:85.7px;top:128.8px;letter-spacing:2.4px">400-665-0028</div>
<div class="wm" style="left:31.2px;top:158.2px">网址：</div>
<div class="wm" style="left:86.4px;top:158.2px;letter-spacing:-0.1px">www.chanjet.net</div>
<div class="wm" style="left:301.5px;top:128.8px">电话：</div>
<div class="wm" style="left:357.0px;top:128.8px;letter-spacing:2.4px">400-665-0028</div>
<div class="wm" style="left:302.5px;top:158.2px">网址：</div>
<div class="wm" style="left:357.7px;top:158.2px;letter-spacing:-0.1px">www.chanjet.net</div>
<div class="wm" style="left:572.8px;top:128.8px">电话：</div>
<div class="wm" style="left:628.3px;top:128.8px;letter-spacing:2.4px">400-665-0028</div>
<div class="wm" style="left:573.8px;top:158.2px">网址：</div>
<div class="wm" style="left:629.0px;top:158.2px;letter-spacing:-0.1px">www.chanjet.net</div>
<div class="wm" style="left:844px;top:128.8px">电话：</div>
<div class="wm" style="left:899.5px;top:128.8px;letter-spacing:2.4px">400-665-0028</div>
<div class="wm" style="left:845px;top:158.2px">网址：</div>
<div class="wm" style="left:900.2px;top:158.2px;letter-spacing:-0.1px">www.chanjet.net</div>
<div class="wm" style="left:30.2px;top:239.3px">电话：</div>
<div class="wm" style="left:85.7px;top:239.3px;letter-spacing:2.4px">400-665-0028</div>
<div class="wm" style="left:31.2px;top:268.7px">网址：</div>
<div class="wm" style="left:86.4px;top:268.7px;letter-spacing:-0.1px">www.chanjet.net</div>
<div class="wm" style="left:301.5px;top:239.3px">电话：</div>
<div class="wm" style="left:357.0px;top:239.3px;letter-spacing:2.4px">400-665-0028</div>
<div class="wm" style="left:302.5px;top:268.7px">网址：</div>
<div class="wm" style="left:357.7px;top:268.7px;letter-spacing:-0.1px">www.chanjet.net</div>
<div class="wm" style="left:572.8px;top:239.3px">电话：</div>
<div class="wm" style="left:628.3px;top:239.3px;letter-spacing:2.4px">400-665-0028</div>
<div class="wm" style="left:573.8px;top:268.7px">网址：</div>
<div class="wm" style="left:629.0px;top:268.7px;letter-spacing:-0.1px">www.chanjet.net</div>
<div class="wm" style="left:844px;top:239.3px">电话：</div>
<div class="wm" style="left:899.5px;top:239.3px;letter-spacing:2.4px">400-665-0028</div>
<div class="wm" style="left:845px;top:268.7px">网址：</div>
<div class="wm" style="left:900.2px;top:268.7px;letter-spacing:-0.1px">www.chanjet.net</div>
<div class="wm" style="left:30.2px;top:349.5px">电话：</div>
<div class="wm" style="left:85.7px;top:349.5px;letter-spacing:2.4px">400-665-0028</div>
<div class="wm" style="left:31.2px;top:379.0px">网址：</div>
<div class="wm" style="left:86.4px;top:379.0px;letter-spacing:-0.1px">www.chanjet.net</div>
<div class="wm" style="left:301.5px;top:349.5px">电话：</div>
<div class="wm" style="left:357.0px;top:349.5px;letter-spacing:2.4px">400-665-0028</div>
<div class="wm" style="left:302.5px;top:379.0px">网址：</div>
<div class="wm" style="left:357.7px;top:379.0px;letter-spacing:-0.1px">www.chanjet.net</div>
<div class="wm" style="left:572.8px;top:349.5px">电话：</div>
<div class="wm" style="left:628.3px;top:349.5px;letter-spacing:2.4px">400-665-0028</div>
<div class="wm" style="left:573.8px;top:379.0px">网址：</div>
<div class="wm" style="left:629.0px;top:379.0px;letter-spacing:-0.1px">www.chanjet.net</div>
<div class="wm" style="left:844px;top:349.5px">电话：</div>
<div class="wm" style="left:899.5px;top:349.5px;letter-spacing:2.4px">400-665-0028</div>
<div class="wm" style="left:845px;top:379.0px">网址：</div>
<div class="wm" style="left:900.2px;top:379.0px;letter-spacing:-0.1px">www.chanjet.net</div>
<!--BOTTOM_END-->
</body></html>
